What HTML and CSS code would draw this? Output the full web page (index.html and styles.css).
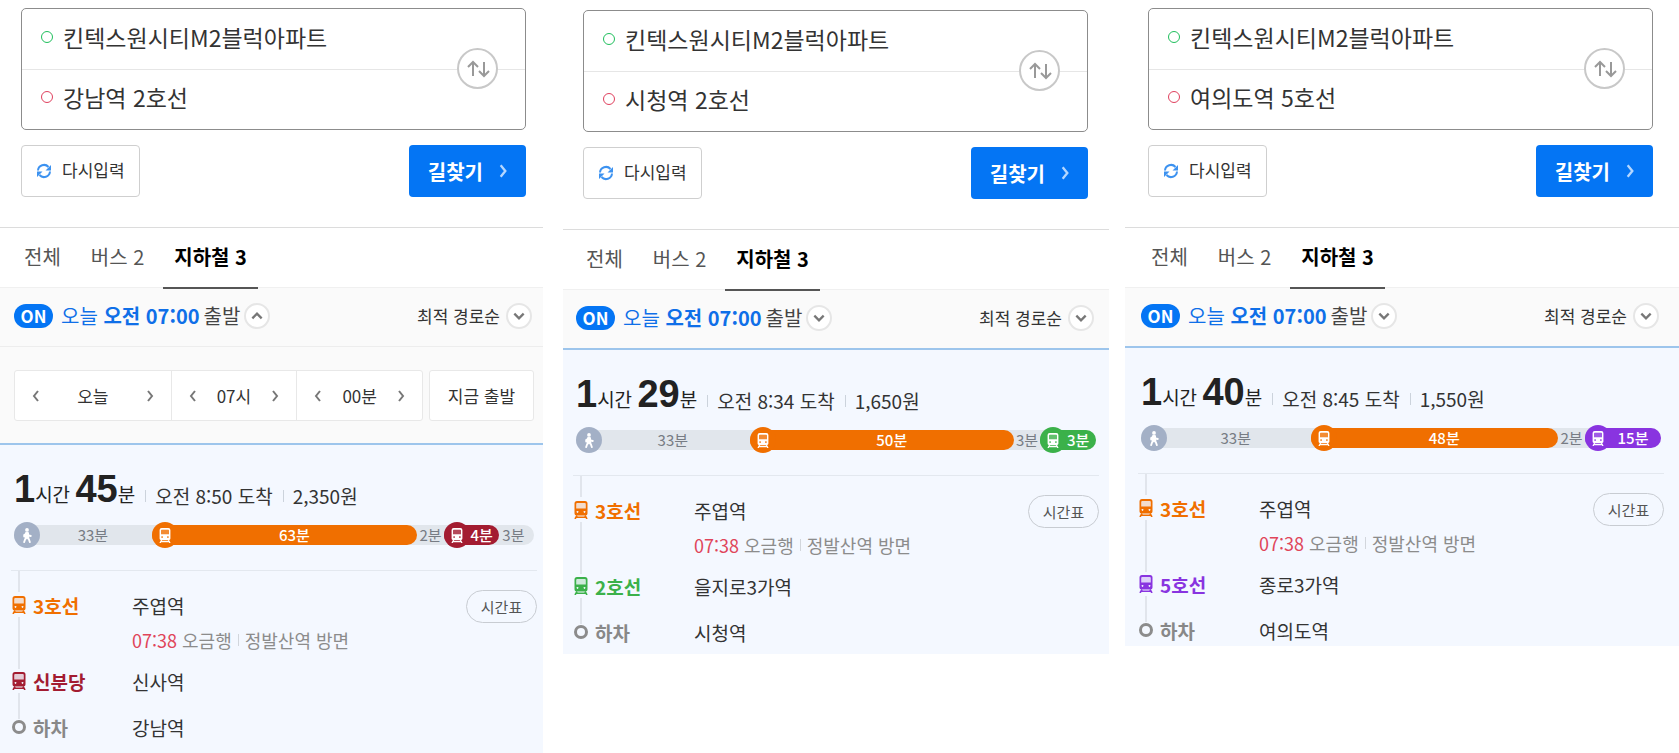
FILE: index.html
```html
<!DOCTYPE html>
<html lang="ko">
<head>
<meta charset="utf-8">
<title>길찾기</title>
<link rel="stylesheet" href="styles.css">
</head>
<body>
<svg class="defs" aria-hidden="true">
  <symbol id="train" viewBox="0 0 14 18">
    <path fill="currentColor" fill-rule="evenodd" d="M3 0h8a2.500 2.500 0 0 1 2.500 2.500v10A2 2 0 0 1 11.500 14.500h-9a2 2 0 0 1-2-2v-10A2.500 2.500 0 0 1 3 0zM3.200 2a1 1 0 0 0-1 1v4.500h9.600V3a1 1 0 0 0-1-1zM3.500 10a.9.900 0 1 0 .01 0zM10.500 10a.9.900 0 1 0 .01 0z"/>
    <path fill="currentColor" opacity=".2" d="M2 2h10v6H2z"/>
    <path fill="none" stroke="currentColor" stroke-width="1.600" d="M3 14.500L1 18M11 14.500l2 3.500M2 16.200h10"/>
  </symbol>
  <symbol id="walk" viewBox="0 0 12 16">
    <circle cx="6" cy="2" r="2" fill="currentColor"/>
    <path fill="none" stroke="currentColor" stroke-width="2" stroke-linecap="round" stroke-linejoin="round" d="M6 5v5l-2 2-1 3M6 10l2 2 1 3M6 5.500L3 7.500V9M6 5.500l2 2.500 2 .5"/>
    <path fill="currentColor" d="M4 4.500h4l.5 6.500H3.500z"/>
  </symbol>
  <symbol id="swap" viewBox="0 0 24 18">
    <path fill="none" stroke="currentColor" stroke-width="2" d="M7 16V2M2 7l5-5 5 5M18 2v14M13 11l5 5 5-5"/>
  </symbol>
  <symbol id="reload" viewBox="0 0 16 16">
    <path fill="none" stroke="currentColor" stroke-width="2" d="M2 7.500A6 6 0 0 1 12.500 4M14 8.500A6 6 0 0 1 3.500 12"/>
    <path fill="currentColor" d="M15 2v5.500H9.500zM1 14V8.500h5.500z"/>
  </symbol>
  <symbol id="chev" viewBox="0 0 12 12">
    <path fill="none" stroke="currentColor" stroke-width="2" d="M2 4l4 4 4-4"/>
  </symbol>
  <symbol id="next" viewBox="0 0 8 12">
    <path fill="none" stroke="currentColor" stroke-width="2" d="M2 1l4 5-4 5"/>
  </symbol>
</svg>
<main class="board">

<section class="panel panel-a">
  <form class="search">
    <div class="fields">
      <label class="field"><span class="dot dot-from"></span><input aria-label="출발지" value="킨텍스원시티M2블럭아파트"></label>
      <label class="field"><span class="dot dot-to"></span><input aria-label="도착지" value="강남역 2호선"></label>
      <button type="button" class="swap" aria-label="출발지 도착지 바꾸기"><svg><use href="#swap"/></svg></button>
    </div>
    <div class="actions">
      <button type="reset" class="reset"><svg><use href="#reload"/></svg><span>다시입력</span></button>
      <button type="button" class="find">길찾기<svg><use href="#next"/></svg></button>
    </div>
  </form>
  <nav class="tabs"><a href="#all">전체</a><a href="#bus">버스 2</a><a href="#subway" class="active">지하철 3</a></nav>
  <div class="options">
    <button type="button" class="depart"><span class="on">ON</span><span class="when">오늘 <b>오전 07:00</b></span> 출발<span class="round up"><svg><use href="#chev"/></svg></span></button>
    <button type="button" class="sort">최적 경로순<span class="round"><svg><use href="#chev"/></svg></span></button>
  </div>
  <div class="picker">
    <div class="steppers">
      <div class="stepper"><button type="button" aria-label="이전 날"><svg class="prev"><use href="#next"/></svg></button>오늘<button type="button" aria-label="다음 날"><svg><use href="#next"/></svg></button></div>
      <div class="stepper"><button type="button" aria-label="이전 시"><svg class="prev"><use href="#next"/></svg></button>07시<button type="button" aria-label="다음 시"><svg><use href="#next"/></svg></button></div>
      <div class="stepper"><button type="button" aria-label="이전 분"><svg class="prev"><use href="#next"/></svg></button>00분<button type="button" aria-label="다음 분"><svg><use href="#next"/></svg></button></div>
    </div>
    <button type="button" class="now">지금 출발</button>
  </div>
  <article class="route">
    <h2 class="summary"><strong>1</strong>시간 <strong>45</strong>분<span class="info">오전 8:50 도착</span><span class="info">2,350원</span></h2>
    <div class="bar">
      <div class="seg walk lead" style="width:26.5%"><span class="badge"><svg><use href="#walk"/></svg></span>33분</div>
      <div class="seg ride line3" style="width:51%"><span class="badge"><svg><use href="#train"/></svg></span>63분</div>
      <div class="seg walk" style="width:5.2%">2분</div>
      <div class="seg ride sinbundang" style="width:10.6%"><span class="badge"><svg><use href="#train"/></svg></span>4분</div>
      <div class="seg walk" style="width:5.5%">3분</div>
    </div>
    <ol class="stops">
      <li class="stop boarding"><span class="rail line3"><svg><use href="#train"/></svg></span><b class="line line3">3호선</b><div class="place">주엽역<p class="next-train"><em>07:38</em> 오금행<span class="toward">정발산역 방면</span></p></div><button type="button" class="timetable">시간표</button></li>
      <li class="stop"><span class="rail sinbundang"><svg><use href="#train"/></svg></span><b class="line sinbundang">신분당</b><div class="place">신사역</div></li>
      <li class="stop last"><span class="rail"><i class="end"></i></span><b class="line off">하차</b><div class="place">강남역</div></li>
    </ol>
  </article>
</section>

<section class="panel panel-b">
  <form class="search">
    <div class="fields">
      <label class="field"><span class="dot dot-from"></span><input aria-label="출발지" value="킨텍스원시티M2블럭아파트"></label>
      <label class="field"><span class="dot dot-to"></span><input aria-label="도착지" value="시청역 2호선"></label>
      <button type="button" class="swap" aria-label="출발지 도착지 바꾸기"><svg><use href="#swap"/></svg></button>
    </div>
    <div class="actions">
      <button type="reset" class="reset"><svg><use href="#reload"/></svg><span>다시입력</span></button>
      <button type="button" class="find">길찾기<svg><use href="#next"/></svg></button>
    </div>
  </form>
  <nav class="tabs"><a href="#all">전체</a><a href="#bus">버스 2</a><a href="#subway" class="active">지하철 3</a></nav>
  <div class="options">
    <button type="button" class="depart"><span class="on">ON</span><span class="when">오늘 <b>오전 07:00</b></span> 출발<span class="round"><svg><use href="#chev"/></svg></span></button>
    <button type="button" class="sort">최적 경로순<span class="round"><svg><use href="#chev"/></svg></span></button>
  </div>
  <article class="route">
    <h2 class="summary"><strong>1</strong>시간 <strong>29</strong>분<span class="info">오전 8:34 도착</span><span class="info">1,650원</span></h2>
    <div class="bar">
      <div class="seg walk lead" style="width:33.4%"><span class="badge"><svg><use href="#walk"/></svg></span>33분</div>
      <div class="seg ride line3" style="width:50.8%"><span class="badge"><svg><use href="#train"/></svg></span>50분</div>
      <div class="seg walk" style="width:5.1%">3분</div>
      <div class="seg ride line2" style="width:10.7%"><span class="badge"><svg><use href="#train"/></svg></span>3분</div>
    </div>
    <ol class="stops">
      <li class="stop boarding"><span class="rail line3"><svg><use href="#train"/></svg></span><b class="line line3">3호선</b><div class="place">주엽역<p class="next-train"><em>07:38</em> 오금행<span class="toward">정발산역 방면</span></p></div><button type="button" class="timetable">시간표</button></li>
      <li class="stop"><span class="rail line2"><svg><use href="#train"/></svg></span><b class="line line2">2호선</b><div class="place">을지로3가역</div></li>
      <li class="stop last"><span class="rail"><i class="end"></i></span><b class="line off">하차</b><div class="place">시청역</div></li>
    </ol>
  </article>
</section>

<section class="panel panel-c">
  <form class="search">
    <div class="fields">
      <label class="field"><span class="dot dot-from"></span><input aria-label="출발지" value="킨텍스원시티M2블럭아파트"></label>
      <label class="field"><span class="dot dot-to"></span><input aria-label="도착지" value="여의도역 5호선"></label>
      <button type="button" class="swap" aria-label="출발지 도착지 바꾸기"><svg><use href="#swap"/></svg></button>
    </div>
    <div class="actions">
      <button type="reset" class="reset"><svg><use href="#reload"/></svg><span>다시입력</span></button>
      <button type="button" class="find">길찾기<svg><use href="#next"/></svg></button>
    </div>
  </form>
  <nav class="tabs"><a href="#all">전체</a><a href="#bus">버스 2</a><a href="#subway" class="active">지하철 3</a></nav>
  <div class="options">
    <button type="button" class="depart"><span class="on">ON</span><span class="when">오늘 <b>오전 07:00</b></span> 출발<span class="round"><svg><use href="#chev"/></svg></span></button>
    <button type="button" class="sort">최적 경로순<span class="round"><svg><use href="#chev"/></svg></span></button>
  </div>
  <article class="route">
    <h2 class="summary"><strong>1</strong>시간 <strong>40</strong>분<span class="info">오전 8:45 도착</span><span class="info">1,550원</span></h2>
    <div class="bar">
      <div class="seg walk lead" style="width:32.6%"><span class="badge"><svg><use href="#walk"/></svg></span>33분</div>
      <div class="seg ride line3" style="width:47.6%"><span class="badge"><svg><use href="#train"/></svg></span>48분</div>
      <div class="seg walk" style="width:5.2%">2분</div>
      <div class="seg ride line5" style="width:14.6%"><span class="badge"><svg><use href="#train"/></svg></span>15분</div>
    </div>
    <ol class="stops">
      <li class="stop boarding"><span class="rail line3"><svg><use href="#train"/></svg></span><b class="line line3">3호선</b><div class="place">주엽역<p class="next-train"><em>07:38</em> 오금행<span class="toward">정발산역 방면</span></p></div><button type="button" class="timetable">시간표</button></li>
      <li class="stop"><span class="rail line5"><svg><use href="#train"/></svg></span><b class="line line5">5호선</b><div class="place">종로3가역</div></li>
      <li class="stop last"><span class="rail"><i class="end"></i></span><b class="line off">하차</b><div class="place">여의도역</div></li>
    </ol>
  </article>
</section>

</main>
</body>
</html>
```
FILE: styles.css
```css
* { box-sizing: border-box; }

body {
  margin: 0;
  background: #fff;
  color: #333;
  font-family: "Noto Sans CJK KR", sans-serif;
  font-size: 17px;
}

button, input {
  font: inherit;
  color: inherit;
}

button {
  border: 0;
  padding: 0;
  background: none;
  cursor: pointer;
}

svg { display: block; }

.defs {
  position: absolute;
  width: 0;
  height: 0;
}

.board {
  display: grid;
  grid-template-columns: 543fr 20fr 546fr 16fr 554fr;
  min-height: 100vh;
}

.panel {
  display: flex;
  flex-direction: column;
  min-width: 0;
}

.panel-a { --left: 1px; --right: 0px; grid-column: 1; }
.panel-b { --left: 0px; --right: 4px; grid-column: 3; padding-top: 2px; }
.panel-c { --left: 3px; --right: 9px; grid-column: 5; }

/* search form */
.search {
  padding: 8px calc(17px + var(--right)) 30px calc(20px + var(--left));
}

.fields {
  position: relative;
  border: 1px solid #8c8c8c;
  border-radius: 5px;
}

.field {
  display: flex;
  align-items: center;
  gap: 10px;
  height: 60px;
  padding: 0 80px 5px 19px;
}

.field + .field {
  border-top: 1px solid #e6e6e6;
}

.field input {
  flex: 1;
  min-width: 0;
  border: 0;
  padding: 0;
  outline: 0;
  background: none;
  font-size: 23px;
  line-height: 34px;
}

.dot {
  width: 12px;
  height: 12px;
  border: 1px solid;
  border-radius: 50%;
}

.dot-from { color: #1fbf5c; }
.dot-to { color: #e0405e; }

.swap {
  position: absolute;
  right: 27px;
  top: 39px;
  display: grid;
  place-items: center;
  width: 41px;
  height: 41px;
  border: 2px solid #c8c8c8;
  border-radius: 50%;
  background: #fff;
  color: #999;
}

.swap svg { width: 24px; height: 18px; }

.actions {
  display: flex;
  justify-content: space-between;
  margin-top: 15px;
}

.reset, .find {
  display: flex;
  align-items: center;
  height: 52px;
  border-radius: 4px;
}

.reset {
  gap: 10px;
  padding: 0 14px;
  border: 1px solid #cfcfcf;
}

.reset span { padding-bottom: 4px; }
.reset svg { width: 16px; height: 16px; color: #3c92f0; }

.find {
  gap: 15px;
  padding: 0 18px 0 19px;
  background: #0475f4;
  color: #fff;
  font-size: 20px;
  font-weight: 700;
}

.find svg { width: 10px; height: 14px; color: #b4d7ff; }

/* tabs */
.tabs {
  display: flex;
  gap: 8px;
  height: 60px;
  border-top: 1px solid #dcdcdc;
  padding-left: calc(12px + var(--left));
}

.tabs a {
  height: 61px;
  padding: 0 11px;
  color: #555;
  font-size: 20px;
  line-height: 58px;
  text-decoration: none;
}

.tabs .active {
  z-index: 1;
  border-bottom: 2px solid #555;
  color: #000;
  font-weight: 700;
}

/* departure options */
.options {
  display: flex;
  align-items: center;
  justify-content: space-between;
  height: 59px;
  padding: 0 calc(11px + var(--right)) 0 calc(13px + var(--left));
  border-top: 1px solid #f0f0f0;
  background: #fafafa;
}

.depart, .sort {
  display: flex;
  align-items: center;
  line-height: 24px;
  padding-bottom: 2px;
}

.depart { gap: 4px; font-size: 20px; color: #444; }
.sort { gap: 6px; }

.on {
  width: 39px;
  height: 24px;
  margin-right: 4px;
  border-radius: 12px;
  background: #0475f4;
  color: #fff;
  font-size: 17px;
  font-weight: 700;
}

.when { color: #0f6fe8; }

.round {
  display: grid;
  place-items: center;
  width: 26px;
  height: 26px;
  border: 2px solid #e6e6e6;
  border-radius: 50%;
  background: #fff;
  color: #777;
}

.round svg { width: 14px; height: 14px; }
.up svg { transform: rotate(180deg); }

.picker {
  display: flex;
  gap: 6px;
  height: 97px;
  padding: 23px calc(9px + var(--right)) 22px calc(13px + var(--left));
  border-top: 1px solid #ededed;
  background: #fafafa;
}

.steppers {
  display: grid;
  flex: 1;
  grid-template-columns: 156fr 126fr 126fr;
  border: 1px solid #e8e8e8;
  border-radius: 3px;
  background: #fff;
}

.stepper {
  display: flex;
  align-items: center;
  justify-content: space-between;
  padding: 0 17px;
}

.stepper + .stepper { border-left: 1px solid #e8e8e8; }
.stepper svg { width: 8px; height: 12px; color: #777; }
.prev { transform: scaleX(-1); }

.now {
  width: 105px;
  border: 1px solid #e8e8e8;
  border-radius: 3px;
  background: #fff;
}

/* route */
.route {
  padding: 20px calc(6px + var(--right)) 0 calc(10px + var(--left));
  border-top: 2px solid #9dc5ec;
  background: #f4f8ff;
}

.panel-a .route { flex: 1; }
.panel-b .route { padding-bottom: 6px; }

.summary {
  display: flex;
  align-items: baseline;
  height: 60px;
  margin: 0;
  padding-left: 3px;
  color: #222;
  font-size: 19px;
  font-weight: 400;
  line-height: 48px;
  white-space: pre;
}

.summary strong {
  font-family: "Liberation Sans", "Noto Sans CJK KR", sans-serif;
  font-size: 38px;
}

.info {
  display: flex;
  align-items: center;
  color: #333;
}

.info::before {
  content: "";
  width: 1px;
  height: 12px;
  margin: 0 9px 0 10px;
  background: #ccd3dc;
}

.bar {
  display: flex;
  height: 20px;
  margin: 0 3px;
  border-radius: 10px;
  background: #e1e6ec;
  font-size: 15px;
  line-height: 20px;
}

.seg {
  position: relative;
  flex: none;
  color: #777c84;
  text-align: center;
  white-space: nowrap;
}

.lead, .ride { padding-left: 20px; }

.ride {
  border-radius: 10px;
  background: var(--line);
  color: #fff;
  font-weight: 500;
}

.badge {
  position: absolute;
  left: 0;
  top: -3px;
  display: grid;
  place-items: center;
  width: 26px;
  height: 26px;
  border-radius: 50%;
  background: #a3b0c6;
  color: #fff;
}

.badge svg { width: 12px; height: 15px; }

.line3 { --line: #f06f00; }
.line2 { --line: #3bb14a; }
.line5 { --line: #8934e0; }
.sinbundang { --line: #a31c31; }
.ride .badge { background: var(--line); }

/* stops */
.stops {
  margin: 25px 0 0;
  padding: 14px 0 0;
  border-top: 1px solid #e3e8ef;
  list-style: none;
}

.stop {
  position: relative;
  display: grid;
  grid-template-columns: 14px 92px 1fr auto;
  column-gap: 7px;
  align-items: start;
  height: 46px;
  padding-left: 1px;
  font-size: 19px;
  line-height: 42px;
}

.boarding { height: 76px; }
.last { height: 36px; }

.rail {
  display: grid;
  place-items: center;
  height: 40px;
  color: var(--line);
}

.rail svg { width: 14px; height: 18px; }

.stop::before {
  content: "";
  position: absolute;
  left: 7px;
  top: 32px;
  bottom: -8px;
  width: 2px;
  background: #e1e5ec;
}

.stop:nth-child(2)::before { bottom: -12px; }
.stop.last::before { display: none; }

.boarding::after {
  content: "";
  position: absolute;
  left: 7px;
  top: -14px;
  height: 21px;
  width: 2px;
  background: #e1e5ec;
}

.end {
  width: 14px;
  height: 14px;
  border: 3px solid #8c8c8c;
  border-radius: 50%;
}

.line { color: var(--line); }
.line.off { color: #888; }

.next-train {
  display: flex;
  align-items: center;
  margin: 0;
  color: #8c8c8c;
  font-size: 18px;
  line-height: 26px;
  white-space: pre;
}

.next-train em { color: #e0455a; font-style: normal; }

.toward {
  display: flex;
  align-items: center;
}

.toward::before {
  content: "";
  width: 1px;
  height: 12px;
  margin: 0 6px;
  background: #d2d6dc;
}

.timetable {
  width: 71px;
  height: 33px;
  margin-top: 5px;
  border: 1px solid #c8ccd2;
  border-radius: 17px;
  color: #555;
  font-size: 15px;
  line-height: 30px;
}
```
